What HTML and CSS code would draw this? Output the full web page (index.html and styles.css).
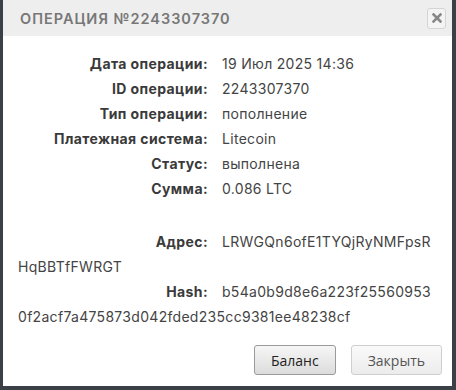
FILE: index.html
```html
<!DOCTYPE html>
<html lang="ru">
<head>
    <meta charset="UTF-8">
    <title>Операция №2243307370</title>
    <link rel="stylesheet" href="styles.css">
</head>
<body>
    <div class="dialog">
        <div class="dialog-header">
            <h1>Операция №2243307370</h1>
            <button class="close-btn" title="Закрыть">
                <svg width="10" height="10" viewBox="0 0 10 10">
                    <path d="M1.5 1.5 L8.5 8.5 M8.5 1.5 L1.5 8.5" stroke="#888" stroke-width="2.6" stroke-linecap="square"/>
                </svg>
            </button>
        </div>

        <div class="dialog-body">
            <div class="row"><span class="label">Дата операции:</span><span class="value">19 Июл 2025 14:36</span></div>
            <div class="row"><span class="label">ID операции:</span><span class="value">2243307370</span></div>
            <div class="row"><span class="label">Тип операции:</span><span class="value">пополнение</span></div>
            <div class="row"><span class="label">Платежная система:</span><span class="value">Litecoin</span></div>
            <div class="row"><span class="label">Статус:</span><span class="value">выполнена</span></div>
            <div class="row"><span class="label">Сумма:</span><span class="value">0.086 LTC</span></div>

            <!-- long values run on below the label -->
            <div class="row spaced"><span class="label">Адрес:</span><span class="value">LRWGQn6ofE1TYQjRyNMFpsR</span></div>
            <div class="row-cont">HqBBTfFWRGT</div>
            <div class="row"><span class="label">Hash:</span><span class="value">b54a0b9d8e6a223f25560953</span></div>
            <div class="row-cont">0f2acf7a475873d042fded235cc9381ee48238cf</div>
        </div>

        <div class="dialog-footer">
            <button class="btn">Баланс</button>
            <button class="btn btn-light">Закрыть</button>
        </div>
    </div>
</body>
</html>
```

FILE: styles.css
```css
* {
    margin: 0;
    padding: 0;
    box-sizing: border-box;
}

body {
    background-color: #3b4046;
    width: 456px;
    height: 390px;
    padding: 0 4px 4px 3px;
    font-family: 'Inter', 'Liberation Sans', sans-serif;
}

.dialog {
    background-color: #fff;
    height: 100%;
    display: flex;
    flex-direction: column;
}

.dialog-header {
    height: 36px;
    background-color: #eeeeee;
    display: flex;
    align-items: center;
    justify-content: space-between;
    padding: 0 6px 0 17px;
}

.dialog-header h1 {
    font-size: 14.5px;
    font-weight: 600;
    color: #777;
    text-transform: uppercase;
    letter-spacing: 1px;
}

.close-btn {
    width: 19px;
    height: 21px;
    border: 1px solid #d4d4d4;
    border-radius: 3px;
    background: #f4f4f4;
    display: flex;
    align-items: center;
    justify-content: center;
}

.dialog-body {
    flex: 1;
    padding: 15px 14px 0 15px;
    font-size: 14px;
    line-height: 25px;
    color: #333;
}

.row.spaced {
    margin-top: 28px;
}

.label {
    display: inline-block;
    width: 190px;
    text-align: right;
    font-weight: 700;
    color: #3a3a3a;
    letter-spacing: 0.4px;
    margin-right: 14px;
}

.value,
.row-cont {
    color: #444;
    letter-spacing: 0.3px;
}

.dialog-footer {
    display: flex;
    justify-content: flex-end;
    gap: 15px;
    padding: 0 10px 11px 0;
}

.btn {
    height: 30px;
    padding: 0 16px;
    font-family: 'Open Sans', 'Liberation Sans', sans-serif;
    font-size: 14px;
    color: #222;
    border: 1px solid #9a9a9a;
    border-radius: 3px;
    background: linear-gradient(#f6f6f6, #dcdcdc);
    cursor: pointer;
}

.btn-light {
    color: #555;
    border-color: #cfcfcf;
    background: linear-gradient(#fafafa, #ececec);
}
```
